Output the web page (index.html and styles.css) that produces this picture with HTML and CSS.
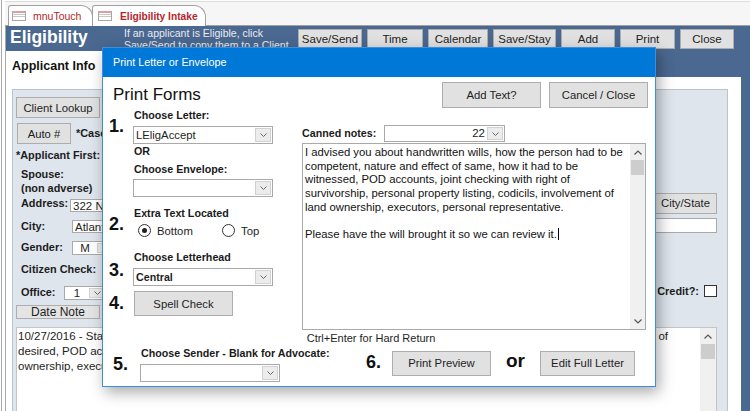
FILE: index.html
```html
<!DOCTYPE html>
<html lang="en">
<head>
    <meta charset="UTF-8">
    <meta name="viewport" content="width=device-width, initial-scale=1.0">
    <title>Eligibility Intake</title>
    <link rel="stylesheet" href="styles.css">
</head>
<body>
    <div class="app">
        <div class="doc-tabs">
            <div class="doc-tab"><span class="form-icon"></span>mnuTouch</div>
            <div class="doc-tab active"><span class="form-icon"></span>Eligibility Intake</div>
        </div>

        <div class="form">
            <div class="form-header">
                <h1 class="form-title">Eligibility</h1>
                <p class="form-note">If an applicant is Eligible, click<br>Save/Send to copy them to a Client</p>
                <div class="header-buttons">
                    <button class="btn hdr-btn w64">Save/Send</button>
                    <button class="btn hdr-btn w56">Time</button>
                    <button class="btn hdr-btn w60">Calendar</button>
                    <button class="btn hdr-btn w63">Save/Stay</button>
                    <button class="btn hdr-btn w54">Add</button>
                    <button class="btn hdr-btn w55">Print</button>
                    <button class="btn hdr-btn w54">Close</button>
                </div>
            </div>

            <div class="page-tabs">
                <div class="page-tab">Applicant Info</div>
            </div>

            <div class="tab-page">
                <div class="panel">
                    <div class="panel-fields">
                        <div class="fields-left">
                            <button class="btn bg-btn lookup-btn">Client Lookup</button>
                            <div class="field-row auto-row">
                                <button class="btn bg-btn auto-btn">Auto #</button>
                                <span class="bg-label">*Case</span>
                            </div>
                            <div class="bg-label first-row">*Applicant First:</div>
                            <div class="bg-label indent spouse-row">Spouse:</div>
                            <div class="bg-label indent adverse-row">(non adverse)</div>
                            <div class="field-row address-row">
                                <span class="bg-label indent label-w49">Address:</span>
                                <span class="bg-input">322 N Main</span>
                            </div>
                            <div class="field-row city-row">
                                <span class="bg-label indent label-w50">City:</span>
                                <span class="bg-input">Atlanta</span>
                            </div>
                            <div class="field-row gender-row">
                                <span class="bg-label indent label-w50">Gender:</span>
                                <span class="bg-combo gender-combo">
                                    <span class="bg-combo-text">M</span>
                                    <span class="combo-arrow"><svg width="7" height="4" viewBox="0 0 7 4"><polyline points="0.5,0.5 3.5,3.5 6.5,0.5" fill="none" stroke="#666" stroke-width="1"/></svg></span>
                                </span>
                            </div>
                            <div class="bg-label indent citizen-row">Citizen Check:</div>
                            <div class="field-row office-row">
                                <span class="bg-label indent label-w43">Office:</span>
                                <span class="bg-combo office-combo">
                                    <span class="bg-combo-text">1</span>
                                    <span class="combo-arrow"><svg width="7" height="4" viewBox="0 0 7 4"><polyline points="0.5,0.5 3.5,3.5 6.5,0.5" fill="none" stroke="#666" stroke-width="1"/></svg></span>
                                </span>
                            </div>
                            <button class="btn bg-btn date-btn">Date Note</button>
                        </div>

                        <div class="fields-right">
                            <button class="btn bg-btn city-btn">City/State</button>
                            <span class="bg-input zip-input"></span>
                            <div class="credit-row">
                                <span class="bg-label">Credit?:</span>
                                <span class="checkbox"></span>
                            </div>
                        </div>
                    </div>

                    <div class="notes-box">
                        <div class="notes-text">
                            <div class="notes-first">
                                <span class="notes-first-text">10/27/2016 - Staff met with applicant</span>
                                <span class="notes-end">of</span>
                            </div>
                            <div>desired, POD accounts</div>
                            <div>ownership, executors</div>
                        </div>
                        <div class="scrollbar">
                            <span class="sb-arrow"><svg width="8" height="5" viewBox="0 0 8 5"><polyline points="0.5,4.5 4,1 7.5,4.5" fill="none" stroke="#555" stroke-width="1.2"/></svg></span>
                            <span class="sb-thumb"></span>
                        </div>
                    </div>
                </div>
            </div>
        </div>
    </div>

    <div class="dialog">
        <div class="dialog-title">Print Letter or Envelope</div>
        <div class="dialog-body">
            <div class="dlg-top">
                <h2 class="dlg-heading">Print Forms</h2>
                <button class="btn dlg-btn">Add Text?</button>
                <button class="btn dlg-btn">Cancel / Close</button>
            </div>

            <div class="dlg-main">
                <div class="steps">
                    <div class="step">
                        <div class="step-num">1.</div>
                        <div class="step-body">
                            <div class="dlg-label">Choose Letter:</div>
                            <div class="combo letter-combo">
                                <span class="combo-text">LEligAccept</span>
                                <span class="combo-arrow"><svg width="7" height="4" viewBox="0 0 7 4"><polyline points="0.5,0.5 3.5,3.5 6.5,0.5" fill="none" stroke="#666" stroke-width="1"/></svg></span>
                            </div>
                            <div class="dlg-label or-label">OR</div>
                            <div class="dlg-label envelope-label">Choose Envelope:</div>
                            <div class="combo envelope-combo">
                                <span class="combo-text"></span>
                                <span class="combo-arrow"><svg width="7" height="4" viewBox="0 0 7 4"><polyline points="0.5,0.5 3.5,3.5 6.5,0.5" fill="none" stroke="#666" stroke-width="1"/></svg></span>
                            </div>
                        </div>
                    </div>

                    <div class="step step-extra">
                        <div class="step-num">2.</div>
                        <div class="step-body">
                            <div class="dlg-label">Extra Text Located</div>
                            <div class="radio-row">
                                <label class="radio-item first"><span class="radio on"></span>Bottom</label>
                                <label class="radio-item"><span class="radio"></span>Top</label>
                            </div>
                        </div>
                    </div>

                    <div class="step step-letterhead">
                        <div class="step-num">3.</div>
                        <div class="step-body">
                            <div class="dlg-label">Choose Letterhead</div>
                            <div class="combo letterhead-combo">
                                <span class="combo-text bold">Central</span>
                                <span class="combo-arrow"><svg width="7" height="4" viewBox="0 0 7 4"><polyline points="0.5,0.5 3.5,3.5 6.5,0.5" fill="none" stroke="#666" stroke-width="1"/></svg></span>
                            </div>
                        </div>
                    </div>

                    <div class="step step-spell">
                        <div class="step-num">4.</div>
                        <div class="step-body">
                            <button class="btn dlg-btn spell-btn">Spell Check</button>
                        </div>
                    </div>
                </div>

                <div class="notes">
                    <div class="canned-row">
                        <span class="dlg-label canned-label">Canned notes:</span>
                        <div class="combo canned-combo">
                            <span class="combo-text right">22</span>
                            <span class="combo-arrow"><svg width="7" height="4" viewBox="0 0 7 4"><polyline points="0.5,0.5 3.5,3.5 6.5,0.5" fill="none" stroke="#666" stroke-width="1"/></svg></span>
                        </div>
                    </div>
                    <div class="textbox">
                        <div class="textbox-text">
                            <div>I advised you about handwritten wills, how the person had to be</div>
                            <div>competent, nature and effect of same, how it had to be</div>
                            <div>witnessed, POD accounts, joint checking with right of</div>
                            <div>survivorship, personal property listing, codicils, involvement of</div>
                            <div>land ownership, executors, personal representative.</div>
                            <div>&nbsp;</div>
                            <div>Please have the will brought it so we can review it.<span class="caret"></span></div>
                        </div>
                        <div class="scrollbar dlg-scroll">
                            <span class="sb-arrow"><svg width="8" height="5" viewBox="0 0 8 5"><polyline points="0.5,4.5 4,1 7.5,4.5" fill="none" stroke="#555" stroke-width="1.2"/></svg></span>
                            <span class="sb-thumb"></span>
                            <span class="sb-space"></span>
                            <span class="sb-arrow"><svg width="8" height="5" viewBox="0 0 8 5"><polyline points="0.5,0.5 4,4 7.5,0.5" fill="none" stroke="#555" stroke-width="1.2"/></svg></span>
                        </div>
                    </div>
                    <div class="hint">Ctrl+Enter for Hard Return</div>
                </div>
            </div>

            <div class="dlg-bottom">
                <div class="step step-sender">
                    <div class="step-num">5.</div>
                    <div class="step-body">
                        <div class="dlg-label">Choose Sender - Blank for Advocate:</div>
                        <div class="combo sender-combo">
                            <span class="combo-text"></span>
                            <span class="combo-arrow"><svg width="7" height="4" viewBox="0 0 7 4"><polyline points="0.5,0.5 3.5,3.5 6.5,0.5" fill="none" stroke="#666" stroke-width="1"/></svg></span>
                        </div>
                    </div>
                </div>
                <div class="final">
                    <div class="step-num">6.</div>
                    <button class="btn dlg-btn">Print Preview</button>
                    <span class="or-text">or</span>
                    <button class="btn dlg-btn edit-btn">Edit Full Letter</button>
                </div>
            </div>
        </div>
    </div>
</body>
</html>
```

FILE: styles.css
```css
:root {
    --header-blue: #4a6890;
    --title-blue: #0078d7;
    --panel-color: #dfe5ec;
    --button-color: #e1e1e1;
    --button-border: #adadad;
    --field-border: #a9a9a9;
    --tab-red: #b3262d;
    --text-color: #1e1e1e;
}

* {
    box-sizing: border-box;
}

html,
body {
    margin: 0;
    height: 100%;
}

body {
    font-family: "Liberation Sans", Arial, sans-serif;
    font-size: 10.7px;
    color: var(--text-color);
    background-color: #fff;
    overflow: hidden;
    position: relative;
}

.btn {
    font-family: inherit;
    color: var(--text-color);
    background-color: var(--button-color);
    border: 1px solid var(--button-border);
    padding: 0;
    margin: 0;
    display: flex;
    align-items: center;
    justify-content: center;
    white-space: nowrap;
    overflow: hidden;
}

/* ---- background form ---- */

.app {
    height: 411px;
    margin-left: 1px;
    border-left: 1px solid #a8a8a8;
    padding-left: 3px;
    display: flex;
    flex-direction: column;
}

.doc-tabs {
    height: 25px;
    flex: none;
    display: flex;
    align-items: flex-end;
    padding-left: 3px;
    background-color: #f6f6f6;
    border-top: 1px solid #dcdcdc;
    border-bottom: 1px solid #a0a0a0;
    margin-top: 1px;
}

.doc-tab {
    height: 21px;
    display: flex;
    align-items: center;
    gap: 7px;
    padding: 0 10px 0 3px;
    margin-bottom: -1px;
    background-color: #fff;
    border: 1px solid #a0a0a0;
    border-bottom: none;
    border-radius: 3px 12px 0 0;
    color: var(--tab-red);
    font-size: 10.5px;
    width: 85px;
    white-space: nowrap;
}

.doc-tab.active {
    width: 114px;
    padding-left: 5px;
    gap: 8px;
    font-weight: bold;
    font-size: 10.2px;
    margin-left: -1px;
}

.form-icon {
    width: 14px;
    height: 10px;
    border: 1px solid #a6a6a6;
    border-top: 2px solid #d9a0a4;
    background: linear-gradient(#fff 0 1px, #c8c8c8 1px 2px, #fff 2px 3px, #c8c8c8 3px 4px, #fff 4px);
    flex: none;
}

.form {
    flex: 1;
    display: flex;
    flex-direction: column;
    background-color: var(--header-blue);
    border-left: 1px solid #a8a8a8;
    min-height: 0;
}

.form-header {
    height: 25px;
    flex: none;
    display: flex;
    align-items: flex-start;
    padding-left: 4px;
    overflow: hidden;
}

.form-title {
    margin: 1px 0 0;
    width: 114px;
    font-size: 17.5px;
    line-height: 20px;
    font-weight: bold;
    color: #fff;
}

.form-note {
    margin: 1px 0 0;
    width: 174px;
    font-size: 10.5px;
    line-height: 12px;
    color: #e8ecf1;
}

.header-buttons {
    display: flex;
    gap: 5px;
    margin-top: 3px;
}

.hdr-btn {
    height: 20px;
    font-size: 11.5px;
}

.w54 { width: 54px; }
.w55 { width: 55px; }
.w56 { width: 56px; }
.w60 { width: 60px; }
.w63 { width: 63px; }
.w64 { width: 64px; }

.page-tabs {
    height: 26px;
    flex: none;
}

.page-tab {
    width: 100px;
    height: 26px;
    background-color: #fff;
    padding: 8px 0 0 6px;
    font-size: 12.5px;
    line-height: 15px;
    font-weight: bold;
    color: #111;
}

.tab-page {
    flex: 1;
    min-height: 0;
    background-color: #fff;
    margin-right: 9px;
    padding: 12px 13px 0 6px;
}

.panel {
    height: 100%;
    background-color: var(--panel-color);
    border: 1px solid #bcc3cb;
    border-bottom: none;
    padding: 0 10px 0 3px;
}

.panel-fields {
    display: flex;
    justify-content: space-between;
    height: 237px;
}

.fields-left {
    width: 300px;
    display: flex;
    flex-direction: column;
    align-items: flex-start;
}

.bg-btn {
    font-size: 11.3px;
    height: 21px;
}

.lookup-btn {
    width: 84px;
    margin-top: 7px;
}

.field-row {
    display: flex;
    align-items: center;
}

.auto-row {
    margin-top: 5px;
    margin-left: 1px;
    gap: 5px;
}

.auto-btn {
    width: 54px;
}

.bg-label {
    font-size: 10.9px;
    line-height: 13px;
    font-weight: bold;
    color: #1c1c1c;
    white-space: nowrap;
}

.indent {
    padding-left: 5px;
}

.first-row { margin-top: 4.6px; }
.spouse-row { margin-top: 6px; }
.adverse-row { margin-top: 1px; }

.address-row {
    margin-top: 2px;
    align-items: flex-start;
}

.label-w49 { width: 54px; }
.label-w50 { width: 55px; }
.label-w43 { width: 48px; }

.bg-input {
    display: block;
    height: 13px;
    width: 90px;
    background-color: #fff;
    border: 1px solid var(--field-border);
    font-size: 11.5px;
    line-height: 12px;
    padding-left: 2px;
    white-space: nowrap;
    overflow: hidden;
}

.address-row .bg-input {
    margin-top: 2px;
}

.city-row {
    margin-top: 8px;
}

.city-row .bg-input {
    margin-left: 1px;
}

.gender-row {
    margin-top: 8px;
}

.citizen-row {
    margin-top: 8.6px;
}

.office-row {
    margin-top: 9.4px;
}

.bg-combo {
    display: flex;
    height: 14px;
    background-color: #fff;
    border: 1px solid var(--field-border);
    font-size: 11.5px;
    line-height: 12px;
}

.bg-combo-text {
    flex: 1;
    text-align: center;
}

.gender-combo {
    width: 60px;
    margin-left: 1px;
}

.gender-combo .bg-combo-text {
    flex: none;
    width: 24px;
}

.office-combo {
    width: 60px;
}

.office-combo .bg-combo-text {
    flex: none;
    width: 24px;
}

.date-btn {
    width: 84px;
    height: 14px;
    margin-top: 5px;
    font-size: 12px;
    background-color: #e4e4e4;
}

.fields-right {
    width: 77px;
    display: flex;
    flex-direction: column;
    align-items: stretch;
}

.city-btn {
    margin-top: 102.7px;
    font-size: 11.3px;
    justify-content: flex-end;
    padding-right: 6px;
}

.zip-input {
    width: 77px;
    height: 15px;
    margin-top: 4px;
}

.credit-row {
    margin-top: 52px;
    display: flex;
    justify-content: flex-end;
    align-items: center;
    gap: 5px;
}

.checkbox {
    width: 13px;
    height: 12px;
    background-color: #fff;
    border: 1px solid #333;
}

.notes-box {
    height: 120px;
    background-color: #fff;
    border: 1px solid #c4c4c4;
    display: flex;
}

.notes-text {
    flex: 1;
    min-width: 0;
    padding: 1px 0 0 1px;
    font-size: 11.5px;
    line-height: 15px;
    white-space: nowrap;
    overflow: hidden;
}

.notes-first {
    display: flex;
}

.notes-first-text {
    flex: 1;
    overflow: hidden;
}

.notes-end {
    margin: 0 32px 0 8px;
}

.scrollbar {
    width: 16px;
    flex: none;
    background-color: #f0f0f0;
    display: flex;
    flex-direction: column;
    align-items: stretch;
}

.sb-arrow {
    height: 16px;
    display: flex;
    align-items: center;
    justify-content: center;
}

.sb-thumb {
    height: 15px;
    margin: 0 1px;
    background-color: #cdcdcd;
}

.sb-space {
    flex: 1;
}

/* ---- dialog ---- */

.dialog {
    position: absolute;
    left: 102px;
    top: 47px;
    width: 554px;
    height: 340px;
    background-color: #fff;
    border: 1px solid #3d8fdc;
    box-shadow: 3px 5px 14px rgb(0 0 0 / 0.35);
}

.dialog-title {
    height: 29px;
    background-color: var(--title-blue);
    color: #fff;
    font-size: 10.8px;
    line-height: 29px;
    padding-left: 10px;
}

.dialog-body {
    padding: 5px 7px 0 6px;
}

.dlg-top {
    display: flex;
    align-items: flex-start;
    height: 26px;
}

.dlg-heading {
    flex: 1;
    margin: 2.6px 0 0 4px;
    font-size: 17px;
    line-height: 20px;
    font-weight: normal;
    color: #111;
}

.dlg-btn {
    width: 99px;
    height: 26px;
    font-size: 11.3px;
}

.dlg-top .dlg-btn + .dlg-btn {
    margin-left: 8px;
}

.dlg-main {
    display: flex;
    align-items: flex-start;
}

.steps {
    width: 193px;
    flex: none;
    padding-top: 1.3px;
}

.step {
    display: flex;
    align-items: flex-start;
}

.step-num {
    width: 24px;
    flex: none;
    padding-top: 8px;
    font-size: 18px;
    line-height: 18px;
    font-weight: bold;
    color: #111;
}

.step-body {
    flex: 1;
}

.dlg-label {
    font-size: 10.7px;
    line-height: 13px;
    font-weight: bold;
    padding-left: 1px;
    white-space: nowrap;
    color: #1a1a1a;
}

.combo {
    display: flex;
    width: 140px;
    height: 18px;
    background-color: #fff;
    border: 1px solid var(--field-border);
}

.combo-text {
    flex: 1;
    padding-left: 2px;
    font-size: 11.3px;
    line-height: 16px;
    white-space: nowrap;
    overflow: hidden;
}

.combo-text.bold {
    font-weight: bold;
    font-size: 10.7px;
}

.combo-text.right {
    text-align: right;
    padding-right: 2px;
    font-size: 11.5px;
    line-height: 15px;
}

.combo-arrow {
    width: 16px;
    flex: none;
    margin: 1px 1px 1px 0;
    background-color: #ececec;
    border: 1px solid #d2d2d2;
    display: flex;
    align-items: center;
    justify-content: center;
}

.letter-combo {
    margin-top: 3.7px;
}

.or-label {
    margin-top: 1.3px;
}

.envelope-label {
    margin-top: 5px;
}

.envelope-combo {
    margin-top: 3px;
}

.step-extra {
    margin-top: 9.3px;
}

.radio-row {
    display: flex;
    margin-top: 4.5px;
    padding-left: 5px;
    height: 13px;
}

.radio-item {
    display: flex;
    align-items: center;
    gap: 6px;
    font-size: 11.3px;
}

.radio-item.first {
    width: 84px;
}

.radio {
    width: 13px;
    height: 13px;
    border: 1px solid #333;
    border-radius: 50%;
    background-color: #fff;
    display: flex;
    align-items: center;
    justify-content: center;
}

.radio.on::after {
    content: "";
    width: 5px;
    height: 5px;
    border-radius: 50%;
    background-color: #222;
}

.step-letterhead {
    margin-top: 13.6px;
}

.step-letterhead .step-num {
    padding-top: 10.4px;
}

.letterhead-combo {
    margin-top: 4.4px;
}

.step-spell {
    margin-top: 5px;
}

.step-spell .step-num {
    padding-top: 3.3px;
}

.spell-btn {
    height: 25.3px;
    margin-left: 1px;
}

.notes {
    width: 344px;
    flex: none;
    margin-top: 17px;
}

.canned-row {
    display: flex;
    align-items: center;
    height: 17px;
}

.canned-label {
    width: 82px;
    padding-left: 0;
}

.canned-combo {
    width: 121px;
    height: 17px;
}

.textbox {
    margin-top: 1px;
    height: 187px;
    border: 1px solid var(--field-border);
    display: flex;
}

.textbox-text {
    flex: 1;
    padding: 2px 0 0 2px;
    font-size: 11.3px;
    line-height: 13.7px;
    white-space: nowrap;
    overflow: hidden;
    color: #111;
}

.caret {
    display: inline-block;
    width: 1px;
    height: 12px;
    background-color: #000;
    vertical-align: -2px;
    margin-left: 1px;
}

.dlg-scroll {
    width: 15px;
}

.hint {
    margin-top: 1.6px;
    padding-left: 4.7px;
    line-height: 13px;
    font-size: 11px;
}

.dlg-bottom {
    display: flex;
    align-items: flex-start;
}

.step-sender {
    width: 257px;
    flex: none;
    margin-top: 2px;
}

.step-sender .step-num {
    width: 31px;
    padding-left: 4px;
    padding-top: 8.4px;
}

.sender-combo {
    margin-top: 4.4px;
}

.final {
    display: flex;
    align-items: flex-start;
    margin-top: 6.1px;
}

.final .step-num {
    width: auto;
    padding-top: 2.3px;
    margin-right: 11px;
}

.final .dlg-btn {
    height: 25.3px;
}

.or-text {
    margin: 0 15px;
    font-size: 19px;
    line-height: 19px;
    font-weight: bold;
    color: #111;
}

.final .edit-btn {
    width: 95px;
    height: 25px;
}
```
